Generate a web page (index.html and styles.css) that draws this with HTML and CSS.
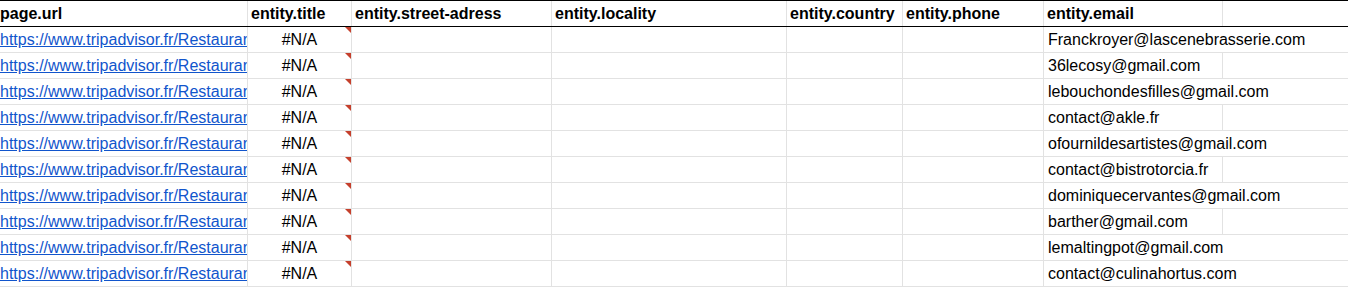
FILE: index.html
```html
<!DOCTYPE html>
<html lang="fr">
<head>
<meta charset="utf-8">
<title>Sheet</title>
<link rel="stylesheet" href="styles.css">
</head>
<body>
<div class="sheet">
  <div class="row head">
    <div class="cell url">page.url</div>
    <div class="cell">entity.title</div>
    <div class="cell">entity.street-adress</div>
    <div class="cell">entity.locality</div>
    <div class="cell">entity.country</div>
    <div class="cell">entity.phone</div>
    <div class="cell">entity.email</div>
    <div class="cell last"></div>
  </div>
  <div class="row">
    <div class="cell url"><a href="#">https://www.tripadvisor.fr/Restaurant_Review-g187147</a></div>
    <div class="cell na">#N/A<span class="flag"></span></div>
    <div class="cell"></div><div class="cell"></div><div class="cell"></div><div class="cell"></div>
    <div class="cell email spill">Franckroyer@lascenebrasserie.com</div>
    <div class="cell last"></div>
  </div>
  <div class="row">
    <div class="cell url"><a href="#">https://www.tripadvisor.fr/Restaurant_Review-g187147</a></div>
    <div class="cell na">#N/A<span class="flag"></span></div>
    <div class="cell"></div><div class="cell"></div><div class="cell"></div><div class="cell"></div>
    <div class="cell email">36lecosy@gmail.com</div>
    <div class="cell last"></div>
  </div>
  <div class="row">
    <div class="cell url"><a href="#">https://www.tripadvisor.fr/Restaurant_Review-g187147</a></div>
    <div class="cell na">#N/A<span class="flag"></span></div>
    <div class="cell"></div><div class="cell"></div><div class="cell"></div><div class="cell"></div>
    <div class="cell email spill">lebouchondesfilles@gmail.com</div>
    <div class="cell last"></div>
  </div>
  <div class="row">
    <div class="cell url"><a href="#">https://www.tripadvisor.fr/Restaurant_Review-g187147</a></div>
    <div class="cell na">#N/A<span class="flag"></span></div>
    <div class="cell"></div><div class="cell"></div><div class="cell"></div><div class="cell"></div>
    <div class="cell email">contact@akle.fr</div>
    <div class="cell last"></div>
  </div>
  <div class="row">
    <div class="cell url"><a href="#">https://www.tripadvisor.fr/Restaurant_Review-g187147</a></div>
    <div class="cell na">#N/A<span class="flag"></span></div>
    <div class="cell"></div><div class="cell"></div><div class="cell"></div><div class="cell"></div>
    <div class="cell email spill">ofournildesartistes@gmail.com</div>
    <div class="cell last"></div>
  </div>
  <div class="row">
    <div class="cell url"><a href="#">https://www.tripadvisor.fr/Restaurant_Review-g187147</a></div>
    <div class="cell na">#N/A<span class="flag"></span></div>
    <div class="cell"></div><div class="cell"></div><div class="cell"></div><div class="cell"></div>
    <div class="cell email">contact@bistrotorcia.fr</div>
    <div class="cell last"></div>
  </div>
  <div class="row">
    <div class="cell url"><a href="#">https://www.tripadvisor.fr/Restaurant_Review-g187147</a></div>
    <div class="cell na">#N/A<span class="flag"></span></div>
    <div class="cell"></div><div class="cell"></div><div class="cell"></div><div class="cell"></div>
    <div class="cell email spill">dominiquecervantes@gmail.com</div>
    <div class="cell last"></div>
  </div>
  <div class="row">
    <div class="cell url"><a href="#">https://www.tripadvisor.fr/Restaurant_Review-g187147</a></div>
    <div class="cell na">#N/A<span class="flag"></span></div>
    <div class="cell"></div><div class="cell"></div><div class="cell"></div><div class="cell"></div>
    <div class="cell email">barther@gmail.com</div>
    <div class="cell last"></div>
  </div>
  <div class="row">
    <div class="cell url"><a href="#">https://www.tripadvisor.fr/Restaurant_Review-g187147</a></div>
    <div class="cell na">#N/A<span class="flag"></span></div>
    <div class="cell"></div><div class="cell"></div><div class="cell"></div><div class="cell"></div>
    <div class="cell email spill">lemaltingpot@gmail.com</div>
    <div class="cell last"></div>
  </div>
  <div class="row">
    <div class="cell url"><a href="#">https://www.tripadvisor.fr/Restaurant_Review-g187147</a></div>
    <div class="cell na">#N/A<span class="flag"></span></div>
    <div class="cell"></div><div class="cell"></div><div class="cell"></div><div class="cell"></div>
    <div class="cell email spill">contact@culinahortus.com</div>
    <div class="cell last"></div>
  </div>
</div>
</body>
</html>
```

FILE: styles.css
```css
* { box-sizing: border-box; }
html, body { margin: 0; padding: 0; background: #fff; }
body {
  font-family: "Liberation Sans", Arial, sans-serif;
  font-size: 16px;
  color: #000;
  overflow: hidden;
}
.sheet {
  border-top: 1px solid #000;
}
.row {
  display: grid;
  grid-template-columns: 248px 104px 200px 235px 116px 141px 179px 1fr;
  height: 26px;
  border-bottom: 1px solid #e2e2e2;
}
.row.head {
  border-bottom: 1px solid #000;
  font-weight: bold;
}
.cell {
  position: relative;
  height: 25px;
  padding: 4px 3px 0 3px;
  line-height: 18px;
  white-space: nowrap;
  overflow: hidden;
  border-right: 1px solid #e2e2e2;
}
.cell.last { border-right: none; }
.cell.url { padding-left: 0; }
.cell.url a {
  color: #1155cc;
  text-decoration: underline;
}
.cell.na { text-align: center; overflow: visible; }
.cell.email { overflow: visible; padding-left: 4px; z-index: 1; }
.cell.email.spill { border-right-color: transparent; }
.flag {
  position: absolute;
  top: 0;
  right: 0;
  width: 0;
  height: 0;
  border-left: 6px solid transparent;
  border-top: 6px solid #c5402c;
}
```
